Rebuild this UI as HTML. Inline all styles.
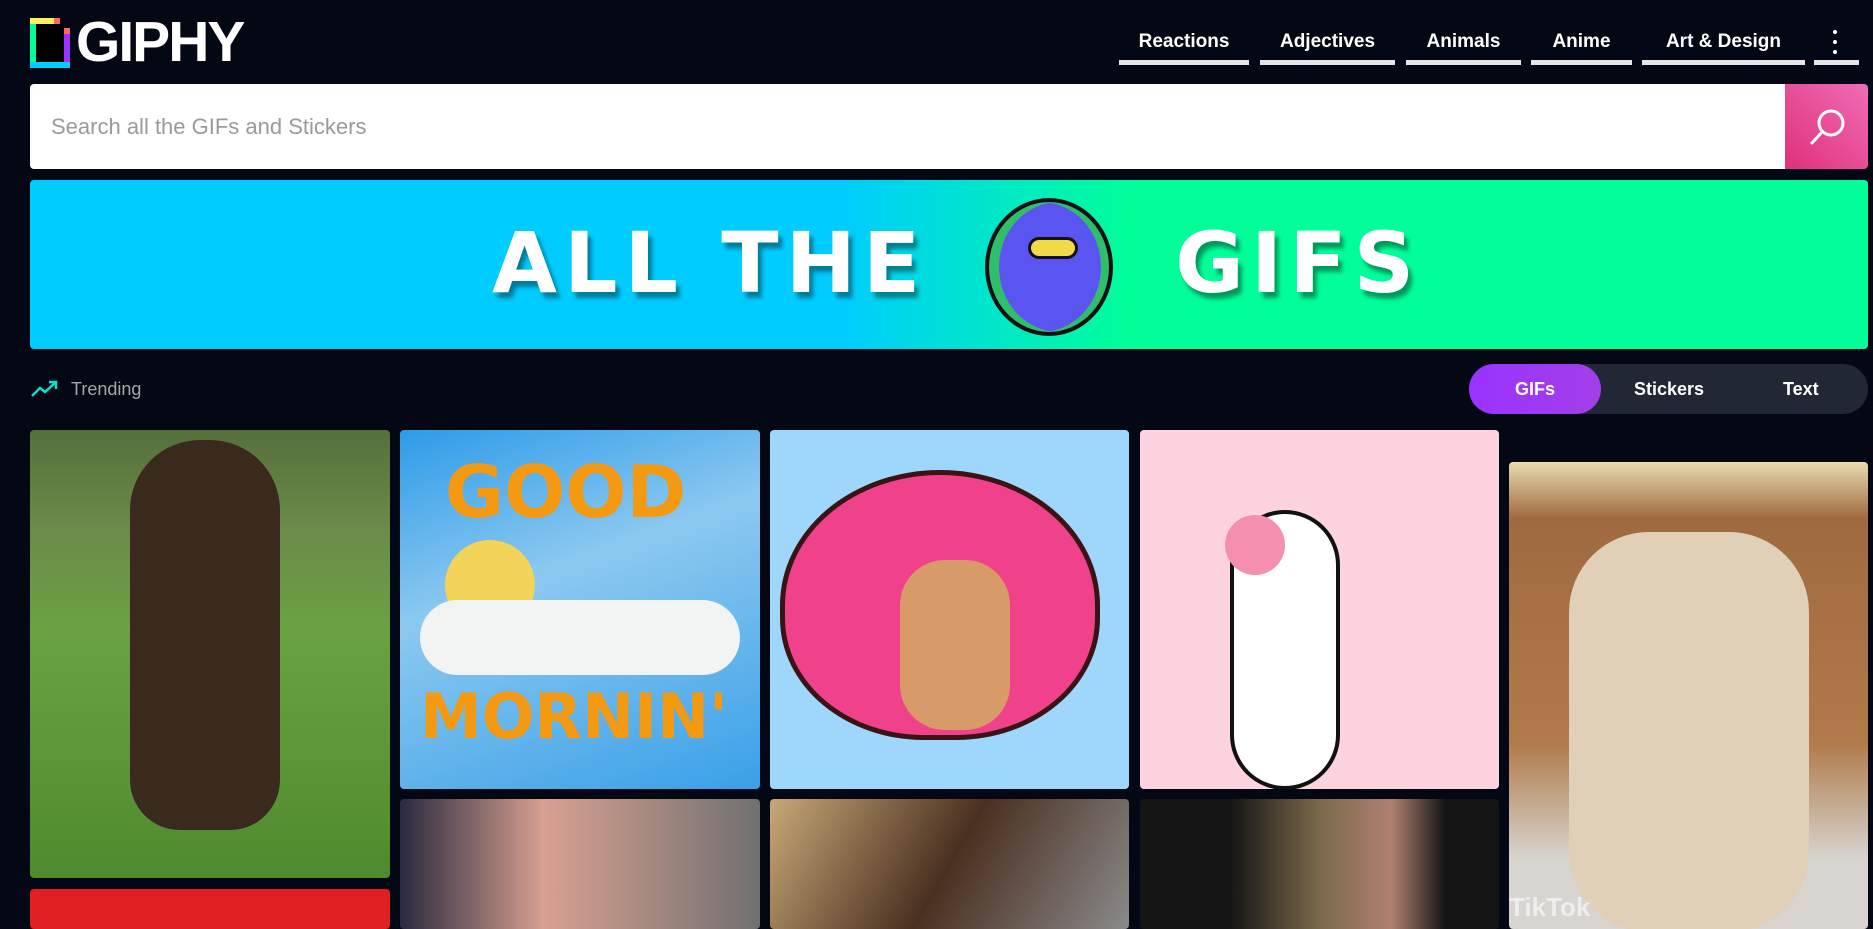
<!DOCTYPE html>
<html><head><meta charset="utf-8">
<style>
*{margin:0;padding:0;box-sizing:border-box}
html,body{width:1873px;height:919px;overflow:hidden;background:#040814;font-family:"Liberation Sans",sans-serif;color:#fff}
.abs{position:absolute}
.nav a{position:absolute;top:28px;height:37px;font-weight:bold;font-size:19px;text-align:center;color:#fff;border-bottom:5px solid #e6e6e6;line-height:28px}
.tile{position:absolute;border-radius:4px;overflow:hidden}
</style></head><body>
<svg class="abs" style="left:30px;top:18px" width="40" height="50" viewBox="0 0 40 50">
<rect x="0" y="0" width="6" height="50" fill="#00ff99"/>
<rect x="0" y="0" width="24" height="6" fill="#fff35c"/>
<rect x="34" y="16" width="6" height="34" fill="#9933ff"/>
<rect x="0" y="44" width="40" height="6" fill="#00ccff"/>
<polygon points="24,0 30,0 30,10 40,10 40,16 24,16 24,0" fill="#ff6666"/>
<rect x="6" y="6" width="28" height="38" fill="#000"/>
</svg>
<div class="abs" style="left:76px;top:10px;font-size:57px;font-weight:bold;letter-spacing:-2px;line-height:64px">GIPHY</div>
<div class="nav">
<a style="left:1119px;width:130px">Reactions</a>
<a style="left:1260px;width:135px">Adjectives</a>
<a style="left:1406px;width:115px">Animals</a>
<a style="left:1531px;width:101px">Anime</a>
<a style="left:1642px;width:163px">Art &amp; Design</a>
<a style="left:1814px;width:45px;border-bottom-width:0">
<span style="position:absolute;left:19px;top:2px;width:4px;height:4px;background:#fff;border-radius:2px"></span>
<span style="position:absolute;left:19px;top:12px;width:4px;height:4px;background:#fff;border-radius:2px"></span>
<span style="position:absolute;left:19px;top:22px;width:4px;height:4px;background:#fff;border-radius:2px"></span>
<span style="position:absolute;left:0;top:32px;width:45px;height:5px;background:#e6e6e6"></span>
</a>
</div>
<div class="abs" style="left:30px;top:84px;width:1756px;height:85px;background:#fff;border-radius:4px 0 0 4px"></div>
<div class="abs" style="left:51px;top:114px;font-size:22px;color:#9a9a9a">Search all the GIFs and Stickers</div>
<div class="abs" style="left:1785px;top:84px;width:83px;height:85px;background:linear-gradient(45deg,#e0307a,#f06cb6);border-radius:0 4px 4px 0"></div>
<svg class="abs" style="left:1808px;top:106px" width="40" height="42" viewBox="0 0 40 42"><circle cx="23" cy="17" r="12" fill="none" stroke="#fff" stroke-width="3"/><line x1="14" y1="26" x2="4" y2="37" stroke="#fff" stroke-width="3" stroke-linecap="round"/></svg>
<div class="abs" style="left:30px;top:180px;width:1838px;height:169px;border-radius:4px;background:linear-gradient(90deg,#00ccff 0%,#00ccff 44%,#00ff99 60%,#00ff99 100%)"></div>
<div class="abs" style="left:492px;top:218px;font-size:84px;font-weight:900;letter-spacing:7px;line-height:90px;font-family:'DejaVu Sans',sans-serif;text-shadow:4px 6px 4px rgba(0,0,0,.4)">ALL THE</div>
<div class="abs" style="left:1175px;top:218px;font-size:84px;font-weight:900;letter-spacing:7px;line-height:90px;font-family:'DejaVu Sans',sans-serif;text-shadow:4px 6px 4px rgba(0,0,0,.4)">GIFS</div>
<div class="abs" style="left:985px;top:198px;width:128px;height:138px;border-radius:50%;background:#5a55f0;border:4px solid #111;box-shadow:inset 10px 0 0 #2fbf6a,inset -8px 0 0 #2fbf6a"></div>
<div class="abs" style="left:1028px;top:237px;width:50px;height:22px;border-radius:11px;background:#f2d94a;border:3px solid #111"></div>
<svg class="abs" style="left:31px;top:380px" width="28" height="18" viewBox="0 0 28 18"><polyline points="1,16 9,8 14,12 25,2" fill="none" stroke="#00e6cc" stroke-width="2.5"/><polyline points="18,2 25,2 25,9" fill="none" stroke="#00e6cc" stroke-width="2.5"/></svg>
<div class="abs" style="left:71px;top:379px;font-size:18px;color:#a6a6a6">Trending</div>
<div class="abs" style="left:1469px;top:364px;width:399px;height:50px;border-radius:25px;background:#212735"></div>
<div class="abs" style="left:1469px;top:364px;width:132px;height:50px;border-radius:25px;background:linear-gradient(90deg,#9933ff,#a33fe8);text-align:center;line-height:50px;font-weight:bold;font-size:18px">GIFs</div>
<div class="abs" style="left:1634px;top:364px;line-height:50px;font-weight:bold;font-size:18px">Stickers</div>
<div class="abs" style="left:1783px;top:364px;line-height:50px;font-weight:bold;font-size:18px">Text</div>
<div class="tile" style="left:30px;top:430px;width:360px;height:448px;background:linear-gradient(180deg,#55703a 0%,#6c8a4a 22%,#6aa242 45%,#4f8a2e 100%)">
<div class="abs" style="left:100px;top:10px;width:150px;height:390px;border-radius:70px 70px 50px 50px;background:#3a2a1e"></div></div>
<div class="tile" style="left:30px;top:889px;width:360px;height:40px;background:#e02020"></div>
<div class="tile" style="left:400px;top:430px;width:360px;height:359px;background:linear-gradient(160deg,#2e9be8,#8cc9f0 40%,#3aa0e8)">
<div class="abs" style="left:45px;top:20px;font-size:72px;font-weight:900;color:#f39a12;font-family:'DejaVu Sans',sans-serif">GOOD</div>
<div class="abs" style="left:45px;top:110px;width:90px;height:90px;border-radius:50%;background:#f3d35a"></div>
<div class="abs" style="left:20px;top:170px;width:320px;height:75px;border-radius:40px;background:#f2f4f4"></div>
<div class="abs" style="left:20px;top:250px;font-size:62px;font-weight:900;color:#f39a12;font-family:'DejaVu Sans',sans-serif">MORNIN'</div></div>
<div class="tile" style="left:770px;top:430px;width:359px;height:359px;background:#9fd6fb">
<div class="abs" style="left:10px;top:40px;width:320px;height:270px;border-radius:50% 50% 45% 45%;background:#f0428a;border:5px solid #3a1414"></div>
<div class="abs" style="left:130px;top:130px;width:110px;height:170px;border-radius:45px;background:#d99a6a"></div></div>
<div class="tile" style="left:1140px;top:430px;width:359px;height:359px;background:#fdd3df">
<div class="abs" style="left:90px;top:80px;width:110px;height:280px;border-radius:60px;background:#fff;border:4px solid #111"></div>
<div class="abs" style="left:85px;top:85px;width:60px;height:60px;border-radius:50%;background:#f48fb0"></div></div>
<div class="tile" style="left:400px;top:799px;width:360px;height:130px;background:linear-gradient(90deg,#2a2a40,#d8a090 40%,#707070)"></div>
<div class="tile" style="left:770px;top:799px;width:359px;height:130px;background:linear-gradient(120deg,#c8a878,#4a3020 50%,#8a8a8a)"></div>
<div class="tile" style="left:1140px;top:799px;width:359px;height:130px;background:linear-gradient(90deg,#151515 25%,#7a6a4a 50%,#b08070 70%,#151515 85%)"></div>
<div class="tile" style="left:1509px;top:462px;width:359px;height:467px;background:linear-gradient(180deg,#e8dcb0 0%,#a06a40 12%,#b07a4a 60%,#d8d4d0 85%)">
<div class="abs" style="left:60px;top:70px;width:240px;height:400px;border-radius:80px;background:#e0d0b8"></div>
<div class="abs" style="left:0;top:430px;font-size:26px;font-weight:bold;color:#eee">TikTok</div></div>
</body></html>
